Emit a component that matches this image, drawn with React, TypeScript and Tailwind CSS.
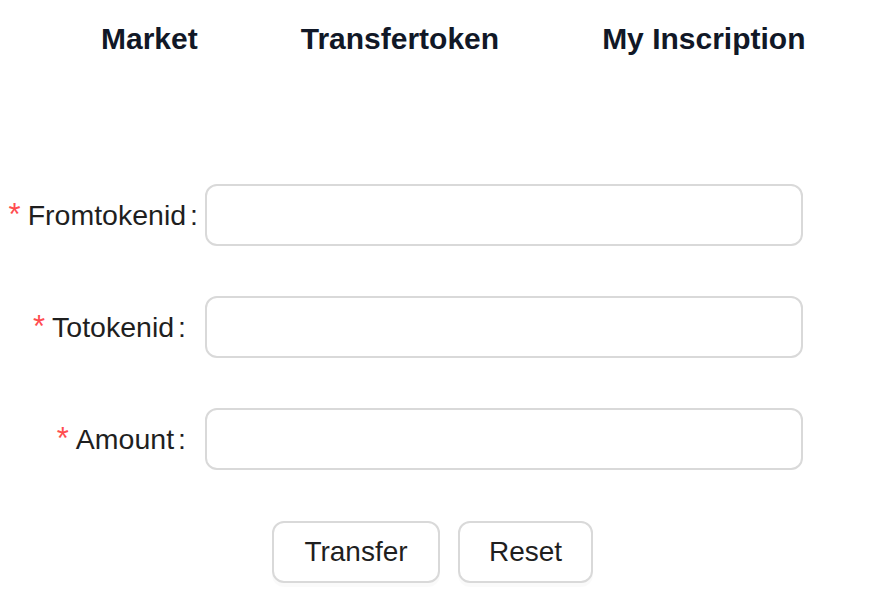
const NAV = ['Market', 'Transfertoken', 'My Inscription'];

const FIELDS: { label: string; colonGap: string }[] = [
  { label: 'Fromtokenid', colonGap: 'mr-[7px]' },
  { label: 'Totokenid', colonGap: 'mr-[19px]' },
  { label: 'Amount', colonGap: 'mr-[19px]' },
];

export default function App() {
  return (
    <div className="w-[896px] h-[616px] bg-white overflow-hidden font-['Liberation_Sans',Arial,sans-serif]">
      {/* Nav */}
      <nav className="flex gap-[103px] pl-[101px] pt-[21px]">
        {NAV.map((item) => (
          <a key={item} className="text-[30px] leading-[36px] font-bold text-[#111827] cursor-pointer">
            {item}
          </a>
        ))}
      </nav>

      {/* Form */}
      <form className="mt-[127px] flex flex-col">
        {FIELDS.map((f) => (
          <div key={f.label} className="flex items-center h-[62px] mb-[50px]">
            <label className="w-[205px] shrink-0 flex justify-end items-center text-[28.5px] leading-[62px] text-[#1f1f1f] whitespace-nowrap">
              <span className="text-[#ff4d4f] text-[31px] mr-[7px]">*</span>
              <span>{f.label}</span>
              <span className={'ml-[4px] ' + f.colonGap}>:</span>
            </label>
            <input
              type="text"
              className="w-[598px] h-[62px] rounded-[12px] border-2 border-[#d9d9d9] bg-white px-4 text-[28px] outline-none"
            />
          </div>
        ))}

        <div className="flex gap-[18px] pl-[272px] mt-[1px]">
          <button
            type="button"
            className="w-[168px] h-[62px] rounded-[12px] border-2 border-[#d9d9d9] bg-white text-[28px] text-[#1f1f1f] shadow-[0_4px_0_rgba(0,0,0,0.02)]"
          >
            Transfer
          </button>
          <button
            type="reset"
            className="w-[135px] h-[62px] rounded-[12px] border-2 border-[#d9d9d9] bg-white text-[28px] text-[#1f1f1f] shadow-[0_4px_0_rgba(0,0,0,0.02)]"
          >
            Reset
          </button>
        </div>
      </form>
    </div>
  );
}
